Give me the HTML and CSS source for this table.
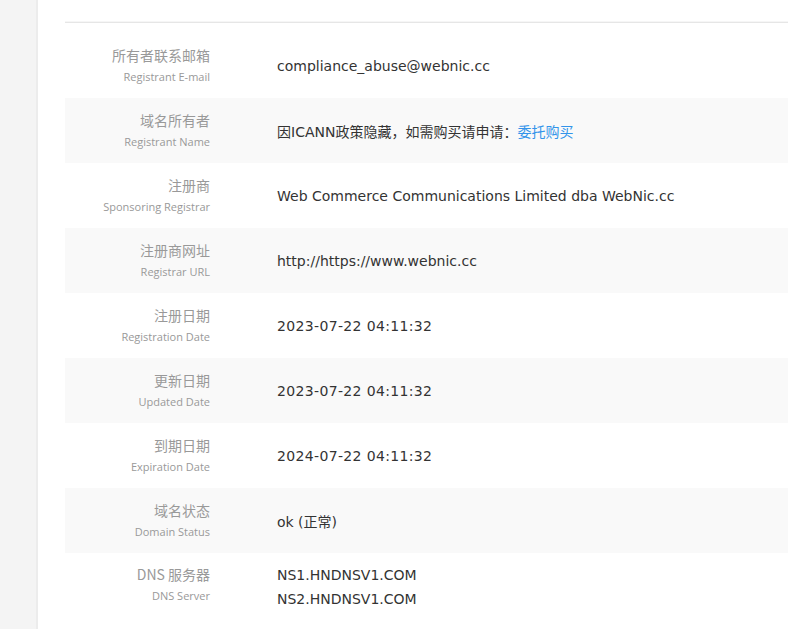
FILE: index.html
```html
<!DOCTYPE html>
<html lang="zh-CN">
<head>
<meta charset="utf-8">
<link rel="stylesheet" href="styles.css">
</head>
<body>
<div class="page">
  <aside class="side"></aside>
  <main class="panel">
    <div class="topline"></div>
    <div class="list">
      <div class="row">
        <div class="label"><div class="zh">所有者联系邮箱</div><div class="en">Registrant E-mail</div></div>
        <div class="value">compliance_abuse@webnic.cc</div>
      </div>
      <div class="row alt">
        <div class="label"><div class="zh">域名所有者</div><div class="en">Registrant Name</div></div>
        <div class="value">因ICANN政策隐藏，如需购买请申请：<a class="link" href="#">委托购买</a></div>
      </div>
      <div class="row">
        <div class="label"><div class="zh">注册商</div><div class="en">Sponsoring Registrar</div></div>
        <div class="value">Web Commerce Communications Limited dba WebNic.cc</div>
      </div>
      <div class="row alt">
        <div class="label"><div class="zh">注册商网址</div><div class="en">Registrar URL</div></div>
        <div class="value">http://https://www.webnic.cc</div>
      </div>
      <div class="row">
        <div class="label"><div class="zh">注册日期</div><div class="en">Registration Date</div></div>
        <div class="value num">2023-07-22 04:11:32</div>
      </div>
      <div class="row alt">
        <div class="label"><div class="zh">更新日期</div><div class="en">Updated Date</div></div>
        <div class="value num">2023-07-22 04:11:32</div>
      </div>
      <div class="row">
        <div class="label"><div class="zh">到期日期</div><div class="en">Expiration Date</div></div>
        <div class="value num">2024-07-22 04:11:32</div>
      </div>
      <div class="row alt">
        <div class="label"><div class="zh">域名状态</div><div class="en">Domain Status</div></div>
        <div class="value">ok (正常)</div>
      </div>
      <div class="row dns">
        <div class="label"><div class="zh">DNS 服务器</div><div class="en">DNS Server</div></div>
        <div class="value"><div class="ns">NS1.HNDNSV1.COM</div><div class="ns">NS2.HNDNSV1.COM</div></div>
      </div>
    </div>
  </main>
</div>
</body>
</html>
```

FILE: styles.css
```css
html, body {
  margin: 0;
  padding: 0;
  background: #f4f4f4;
}
.page {
  display: flex;
  width: 788px;
  height: 629px;
  overflow: hidden;
}
.side {
  width: 36px;
  flex: none;
  background: #f4f4f4;
  border-right: 2px solid #ececec;
}
.panel {
  flex: 1;
  background: #fff;
  padding: 0 0 0 27px;
}
.topline {
  height: 22px;
  border-bottom: 1px solid #e6e6e6;
  box-shadow: 0 -4px 0 -3px #f6f6f6 inset;
}
.list {
  padding-top: 10px;
}
.row {
  display: flex;
  align-items: center;
  height: 65px;
}
.row.alt {
  background: #f9f9f9;
}
.label {
  width: 145px;
  flex: none;
  text-align: right;
  font-family: "Open Sans", "Noto Sans CJK SC", sans-serif;
}
.zh {
  font-family: "Noto Sans CJK SC", sans-serif;
  font-size: 14px;
  line-height: 22px;
  color: #999;
}
.en {
  font-size: 11px;
  line-height: 22px;
  color: #999;
}
.value {
  padding-left: 67px;
  font-family: "DejaVu Sans", "Noto Sans CJK SC", sans-serif;
  font-size: 14px;
  color: #333;
}
.value.num {
  letter-spacing: 0.35px;
}
.link {
  color: #3394ea;
  text-decoration: none;
}
.row.dns {
  align-items: flex-start;
  padding-top: 10px;
}
.ns {
  line-height: 24px;
}
```
